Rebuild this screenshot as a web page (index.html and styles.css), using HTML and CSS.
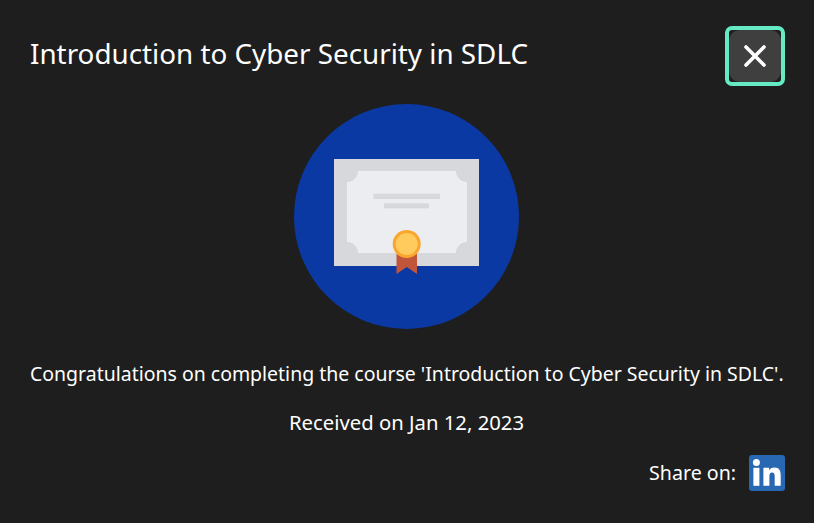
FILE: index.html
```html
<!DOCTYPE html>
<html>
	<head>
		<meta charset="utf-8" />
		<title>Certificate</title>
		<link rel="stylesheet" href="styles.css">
	</head>
	<body>
		<div class="dialog">
			<div class="header">
				<h1 class="title">Introduction to Cyber Security in SDLC</h1>
				<button class="close" type="button" aria-label="Close">
					<span class="close-inner">
						<svg width="24" height="24" viewBox="0 0 24 24">
							<path d="M3 3 L21 21 M21 3 L3 21" stroke="#fff" stroke-width="3.6" stroke-linecap="round" fill="none" />
						</svg>
					</span>
				</button>
			</div>
			<div class="badge">
				<svg width="225" height="225" viewBox="0 0 225 225">
					<circle cx="112.5" cy="112.5" r="112.5" fill="#0b39a4" />
					<path d="M102.5 150 H123 V170 L112.7 163 L102.5 170 Z" fill="#c1553a" />
					<rect x="40" y="55" width="145" height="107" fill="#d6d8dc" />
					<path d="M64 67 H162 A11 11 0 0 0 173 78 V138 A11 11 0 0 0 162 149 H64 A11 11 0 0 0 53 138 V78 A11 11 0 0 0 64 67 Z" fill="#ecedf0" />
					<rect x="79.5" y="89.7" width="66.5" height="5.3" fill="#d6d8dc" />
					<rect x="90" y="99.3" width="45" height="5" fill="#d6d8dc" />
					<path d="M102.5 150 H123 V162 H102.5 Z" fill="#c1553a" />
					<circle cx="112.7" cy="140" r="14" fill="#faa62e" />
					<circle cx="112.7" cy="140" r="11" fill="#ffcb5c" />
				</svg>
			</div>
			<p class="message">Congratulations on completing the course 'Introduction to Cyber Security in SDLC'.</p>
			<p class="received">Received on Jan 12, 2023</p>
			<div class="share">
				<span class="share-label">Share on:</span>
				<svg width="36" height="36" viewBox="0 0 36 36">
					<rect width="36" height="36" rx="3" fill="#2867b2" />
					<circle cx="7.4" cy="7.6" r="3.5" fill="#fff" />
					<rect x="4.4" y="12.8" width="6" height="18" fill="#fff" />
					<path d="M14.4 12.8 H20.1 V15.3 C21 13.7 22.9 12.4 25.4 12.4 C30.4 12.4 31.7 15.6 31.7 20.2 V30.8 H25.7 V21.4 C25.7 19.2 25.2 17.5 23.1 17.5 C21 17.5 20.4 19.2 20.4 21.4 V30.8 H14.4 Z" fill="#fff" />
				</svg>
			</div>
		</div>
	</body>
</html>
```

FILE: styles.css
```css
*{
	margin:0px;
	padding:0px;
	box-sizing: border-box;
}
html,body{
	height: 100%;
}
body{
	background: #1e1e1e;
	color: #fff;
	font-family: "Noto Sans", "Open Sans", sans-serif;
	overflow: hidden;
}
.dialog{
	padding: 26px 29px 0 30px;
	display: flex;
	flex-direction: column;
}
.header{
	display: flex;
	justify-content: space-between;
	align-items: flex-start;
	height: 60px;
}
.title{
	font-size: 27.8px;
	font-weight: 400;
	line-height: 54px;
}
.close{
	width: 60px;
	height: 60px;
	background: #1e1e1e;
	border: 4px solid #65ebc3;
	border-radius: 7px;
}
.close-inner{
	display: flex;
	align-items: center;
	justify-content: center;
	width: 100%;
	height: 100%;
	background: #3f3f3f;
	border-radius: 11px;
}
.badge{
	display: flex;
	justify-content: center;
	margin-top: 18px;
	margin-right: 2px;
}
.badge svg{
	display: block;
}
.message{
	font-size: 19.48px;
	line-height: 28px;
	text-align: center;
	margin-top: 31px;
	margin-right: 2px;
	white-space: nowrap;
}
.received{
	font-size: 20.3px;
	line-height: 28px;
	text-align: center;
	margin-top: 20px;
	margin-right: 2px;
}
.share{
	display: flex;
	justify-content: flex-end;
	align-items: center;
	gap: 13px;
	font-size: 19.6px;
	margin-top: 19px;
}
.share-label{
	padding-bottom: 2px;
}
.share svg{
	display: block;
}
```
